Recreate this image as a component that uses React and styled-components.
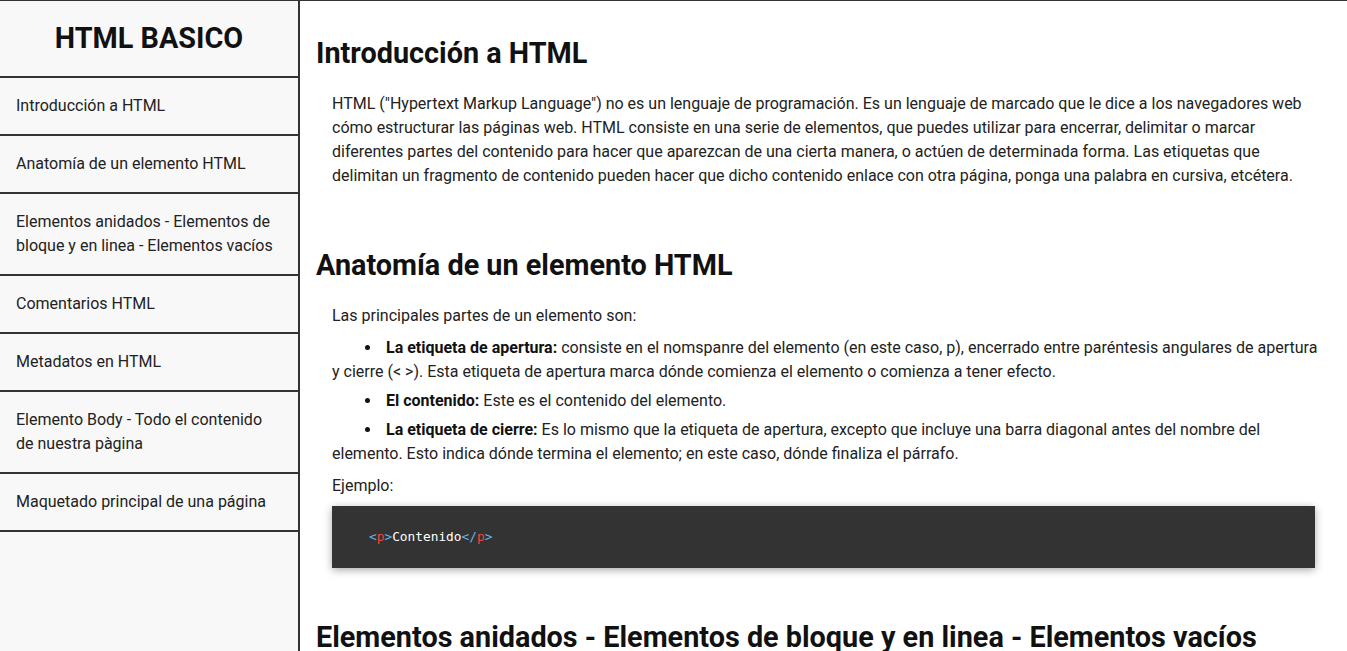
import React from "react";
import styled, { createGlobalStyle } from "styled-components";

const Global = createGlobalStyle`
  html, body { margin: 0; padding: 0; overflow: hidden; }
  body { font-family: Roboto, "Liberation Sans", sans-serif; color: #222; background: #fff; }
  * { box-sizing: border-box; }
`;

const Page = styled.div`
  display: flex;
  height: 100vh;
  overflow: hidden;
  border-top: 1px solid #333;
`;

const Sidebar = styled.nav`
  flex: 0 0 300px;
  height: 100%;
  background: #f8f8f8;
  border-right: 2px solid #333;
  display: flex;
  flex-direction: column;
`;

const SideHeader = styled.header`
  height: 77px;
  display: flex;
  align-items: center;
  justify-content: center;
  border-bottom: 2px solid #333;
  margin: 0;
  font-size: 28.8px;
  font-weight: 700;
  color: #111;
  padding-bottom: 1px;
`;

const NavList = styled.ul`
  list-style: none;
  margin: 0;
  padding: 0;
`;

const NavItem = styled.li`
  padding: 16px 16px;
  font-size: 16px;
  line-height: 24px;
  color: #222;
  border-bottom: 2px solid #333;
`;

const Main = styled.main`
  flex: 1;
  padding: 0 16px;
  overflow: hidden;
`;

const Section = styled.section`
  padding: 33px 0 17px;
`;

const Title = styled.h2`
  margin: 0 0 20px;
  font-size: 28.8px;
  line-height: 38px;
  font-weight: 700;
  color: #111;
  white-space: nowrap;
`;

const Body = styled.div`
  padding: 0 16px;
`;

const P = styled.p`
  margin: 0 0 8px;
  font-size: 16px;
  line-height: 24px;
  color: #222;
`;

const List = styled.ul`
  list-style: none;
  margin: 0 -8px 8px 0;
  padding: 0;
`;

const Item = styled.li`
  font-size: 16px;
  line-height: 24px;
  color: #222;
  text-indent: 33px;
  & + & { margin-top: 5px; }
  &::before {
    content: "";
    display: inline-block;
    width: 5px;
    height: 5px;
    border-radius: 50%;
    background: #111;
    vertical-align: middle;
    margin: -2px 16px 0 0;
  }
`;

const Strong = styled.strong`
  font-weight: 700;
  color: #111;
`;

const CodeBox = styled.pre`
  margin: 0;
  background: #333;
  padding: 22px 37px;
  box-shadow: 0 2px 8px rgba(0, 0, 0, 0.35);
  font-family: "DejaVu Sans Mono", "Liberation Mono", monospace;
  font-size: 12.8px;
  line-height: 18px;
  color: #fff;
`;

const Tok = styled.span`
  color: ${(p) => (p.$kind === "tag" ? "#f0473c" : p.$kind === "punct" ? "#62b2ea" : "#fff")};
`;

const navItems = [
  "Introducción a HTML",
  "Anatomía de un elemento HTML",
  "Elementos anidados - Elementos de bloque y en linea - Elementos vacíos",
  "Comentarios HTML",
  "Metadatos en HTML",
  "Elemento Body - Todo el contenido de nuestra pàgina",
  "Maquetado principal de una página",
];

export default function App() {
  return (
    <>
      <Global />
      <Page>
        <Sidebar>
          <SideHeader>HTML BASICO</SideHeader>
          <NavList>
            {navItems.map((t) => (
              <NavItem key={t}>{t}</NavItem>
            ))}
          </NavList>
        </Sidebar>
        <Main>
          <Section>
            <Title>Introducción a HTML</Title>
            <Body>
              <P>
                HTML ("Hypertext Markup Language") no es un lenguaje de programación. Es un lenguaje de marcado que le dice a los navegadores web cómo estructurar las páginas web. HTML consiste en una serie de elementos, que puedes utilizar para encerrar, delimitar o marcar diferentes partes del contenido para hacer que aparezcan de una cierta manera, o actúen de determinada forma. Las etiquetas que delimitan un fragmento de contenido pueden hacer que dicho contenido enlace con otra página, ponga una palabra en cursiva, etcétera.
              </P>
            </Body>
          </Section>
          <Section>
            <Title>Anatomía de un elemento HTML</Title>
            <Body>
              <P>Las principales partes de un elemento son:</P>
              <List>
                <Item>
                  <Strong>La etiqueta de apertura:</Strong> consiste en el nomspanre del elemento (en este caso, p), encerrado entre paréntesis angulares de apertura y cierre (&lt; &gt;). Esta etiqueta de apertura marca dónde comienza el elemento o comienza a tener efecto.
                </Item>
                <Item>
                  <Strong>El contenido:</Strong> Este es el contenido del elemento.
                </Item>
                <Item>
                  <Strong>La etiqueta de cierre:</Strong> Es lo mismo que la etiqueta de apertura, excepto que incluye una barra diagonal antes del nombre del elemento. Esto indica dónde termina el elemento; en este caso, dónde finaliza el párrafo.
                </Item>
              </List>
              <P>Ejemplo:</P>
              <CodeBox>
                <code>
                  <Tok $kind="punct">&lt;</Tok>
                  <Tok $kind="tag">p</Tok>
                  <Tok $kind="punct">&gt;</Tok>
                  <Tok>Contenido</Tok>
                  <Tok $kind="punct">&lt;/</Tok>
                  <Tok $kind="tag">p</Tok>
                  <Tok $kind="punct">&gt;</Tok>
                </code>
              </CodeBox>
            </Body>
          </Section>
          <Section>
            <Title>Elementos anidados - Elementos de bloque y en linea - Elementos vacíos</Title>
            <Body>
              <P>Puedes poner elementos dentro de otros elementos, esto se llama anidamiento.</P>
            </Body>
          </Section>
        </Main>
      </Page>
    </>
  );
}
